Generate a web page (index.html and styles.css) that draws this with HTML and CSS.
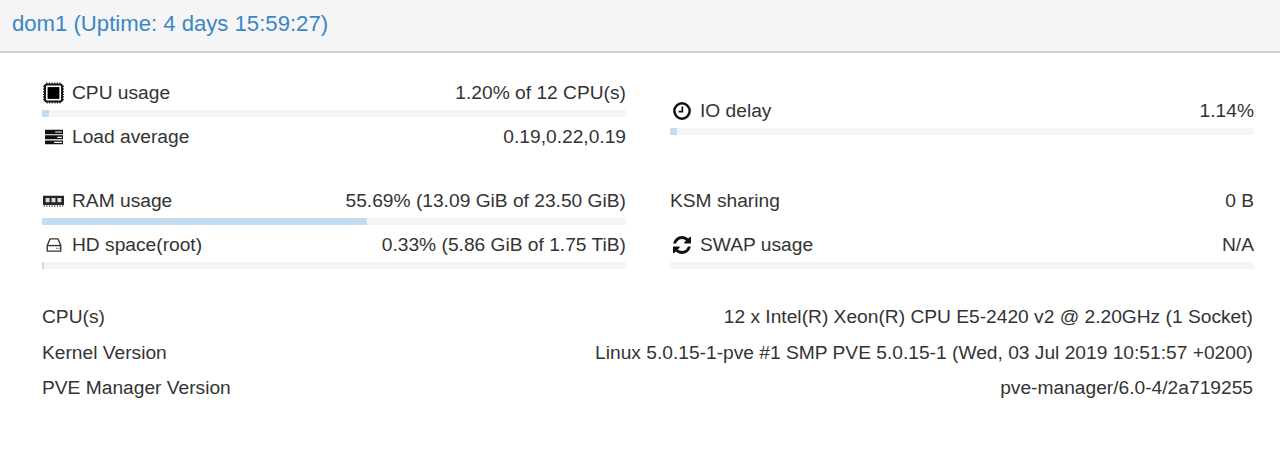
FILE: index.html
```html
<!DOCTYPE html>
<html lang="en">
<head>
    <meta charset="UTF-8">
    <title>dom1 - Node Status</title>
    <link rel="stylesheet" href="styles.css">
</head>
<body>

    <div class="panel-header">dom1 (Uptime: 4 days 15:59:27)</div>

    <div class="panel-body">
        <div class="stats">
            <div class="group">
                <div class="stat">
                    <div class="stat-line">
                        <span class="stat-label">
                            <svg class="icon icon-wide" viewBox="0 0 16 16">
                                <rect x="1.500" y="1.500" width="13" height="13" rx="1.500" fill="#fff" stroke="#111" stroke-width="1.500"/>
                                <rect x="3.500" y="3.500" width="9" height="9" fill="#000"/>
                                <path d="M3 0v1.500M5 0v1.500M7 0v1.500M9 0v1.500M11 0v1.500M13 0v1.500M3 14.500V16M5 14.500V16M7 14.500V16M9 14.500V16M11 14.500V16M13 14.500V16M0 3h1.500M0 5h1.500M0 7h1.500M0 9h1.500M0 11h1.500M0 13h1.500M14.500 3H16M14.500 5H16M14.500 7H16M14.500 9H16M14.500 11H16M14.500 13H16" stroke="#222" stroke-width=".9"/>
                            </svg>
                            CPU usage
                        </span>
                        <span>1.20% of 12 CPU(s)</span>
                    </div>
                    <div class="bar"><div class="bar-fill" style="width: 1.2%"></div></div>
                </div>
                <div class="stat">
                    <div class="stat-line">
                        <span class="stat-label">
                            <svg class="icon icon-right" viewBox="0 0 16 16">
                                <path d="M0 1.500h16v4H0zM0 6.500h16v3.500H0zM0 11h16v3.500H0z" fill="#111"/>
                                <path d="M9 3h6v1H9zM11 7.800h4v1h-4zM8 12.300h7v1H8z" fill="#fff"/>
                            </svg>
                            Load average
                        </span>
                        <span>0.19,0.22,0.19</span>
                    </div>
                </div>
            </div>

            <div class="group group-center">
                <div class="stat">
                    <div class="stat-line">
                        <span class="stat-label">
                            <svg class="icon icon-right" viewBox="0 0 16 16">
                                <circle cx="8" cy="8" r="6.800" fill="none" stroke="#111" stroke-width="2.200"/>
                                <path d="M8.300 4v4.500H5" fill="none" stroke="#111" stroke-width="1.500"/>
                            </svg>
                            IO delay
                        </span>
                        <span>1.14%</span>
                    </div>
                    <div class="bar"><div class="bar-fill" style="width: 1.14%"></div></div>
                </div>
            </div>

            <div class="group">
                <div class="stat">
                    <div class="stat-line">
                        <span class="stat-label">
                            <svg class="icon icon-wide" viewBox="0 0 16 16">
                                <path d="M0 4h16v7H0z" fill="#222"/>
                                <path d="M2 5.800h3v3.200H2zM6.500 5.800h3v3.200h-3zM11 5.800h3v3.200h-3z" fill="#ddd"/>
                                <path d="M1 11v1.500M3 11v1.500M5 11v1.500M7 11v1.500M9 11v1.500M11 11v1.500M13 11v1.500M15 11v1.500" stroke="#666" stroke-width=".8"/>
                            </svg>
                            RAM usage
                        </span>
                        <span>55.69% (13.09 GiB of 23.50 GiB)</span>
                    </div>
                    <div class="bar"><div class="bar-fill" style="width: 55.69%"></div></div>
                </div>
                <div class="stat">
                    <div class="stat-line">
                        <span class="stat-label">
                            <svg class="icon icon-right" viewBox="0 0 16 16">
                                <path d="M4.500 2.500h7l2.500 6v5H2v-5z" fill="none" stroke="#333" stroke-width="1.200" stroke-linejoin="round"/>
                                <path d="M2 8.500h12" stroke="#333" stroke-width="1.200"/>
                                <path d="M10 10.400h1v1h-1zM12 10.400h1v1h-1z" fill="#333"/>
                            </svg>
                            HD space(root)
                        </span>
                        <span>0.33% (5.86 GiB of 1.75 TiB)</span>
                    </div>
                    <div class="bar"><div class="bar-fill" style="width: 0.33%"></div></div>
                </div>
            </div>

            <div class="group">
                <div class="stat stat-nobar">
                    <div class="stat-line">
                        <span>KSM sharing</span>
                        <span>0 B</span>
                    </div>
                </div>
                <div class="stat">
                    <div class="stat-line">
                        <span class="stat-label">
                            <svg class="icon icon-right" viewBox="128 128 1536 1536">
                                <path d="M1639 1056q0 5-1 7-64 268-268 434.500t-478 166.500q-146 0-282.500-55t-243.500-157l-129 129q-19 19-45 19t-45-19-19-45v-448q0-26 19-45t45-19h448q26 0 45 19t19 45-19 45l-137 137q71 66 161 102t187 36q134 0 250-65t186-179q11-17 53-117 8-23 30-23h192q13 0 22.500 9.500t9.500 22.500zm25-800v448q0 26-19 45t-45 19h-448q-26 0-45-19t-19-45 19-45l138-138q-148-137-349-137-134 0-250 65t-186 179q-11 17-53 117-8 23-30 23h-199q-13 0-22.500-9.500t-9.500-22.500v-7q65-268 270-434.500t480-166.500q146 0 284 55.500t245 156.500l130-129q19-19 45-19t45 19 19 45z" fill="#111"/>
                            </svg>
                            SWAP usage
                        </span>
                        <span>N/A</span>
                    </div>
                    <div class="bar"></div>
                </div>
            </div>
        </div>

        <div class="info">
            <div class="info-row">
                <span>CPU(s)</span>
                <span>12 x Intel(R) Xeon(R) CPU E5-2420 v2 @ 2.20GHz (1 Socket)</span>
            </div>
            <div class="info-row">
                <span>Kernel Version</span>
                <span>Linux 5.0.15-1-pve #1 SMP PVE 5.0.15-1 (Wed, 03 Jul 2019 10:51:57 +0200)</span>
            </div>
            <div class="info-row">
                <span>PVE Manager Version</span>
                <span>pve-manager/6.0-4/2a719255</span>
            </div>
        </div>
    </div>

</body>
</html>
```

FILE: styles.css
```css
* {
    margin: 0;
    padding: 0;
    box-sizing: border-box;
}

body {
    background-color: #fff;
    color: #333;
    font-family: 'Liberation Sans', Arial, sans-serif;
    font-size: 19.200px;
    overflow: hidden;
}

.panel-header {
    height: 53px;
    padding: 11px 12px 0;
    background-color: #f5f5f5;
    border-bottom: 2px solid #cfcfcf;
    color: #3a87c8;
    font-size: 22.130px;
    line-height: 25px;
}

.panel-body {
    padding: 29px 26px 0 42px;
}

.stats {
    display: grid;
    grid-template-columns: 584px 584px;
    column-gap: 44px;
    row-gap: 37px;
}

.group {
    min-height: 71px;
}

.group-center {
    display: flex;
    flex-direction: column;
    justify-content: center;
}

.stat + .stat {
    margin-top: 9px;
}

.stat-nobar {
    margin-bottom: 22px;
}

.stat-line {
    display: flex;
    justify-content: space-between;
    line-height: 22px;
}

.stat-label {
    display: flex;
    align-items: center;
    gap: 8px;
}

.icon {
    width: 22px;
    height: 22px;
    flex-shrink: 0;
}

.icon-wide {
    padding: 0 0 0 1px;
}

.icon-right {
    padding: 2px 1px 2px 3px;
}

.bar {
    height: 7px;
    margin-top: 6px;
    background-color: #f5f5f5;
}

.bar-fill {
    height: 100%;
    min-width: 2px;
    background-color: #c2ddf2;
}

.info {
    margin-top: 30px;
}

.info-row {
    display: flex;
    justify-content: space-between;
    padding-right: 1px;
    line-height: 35.500px;
}
```
